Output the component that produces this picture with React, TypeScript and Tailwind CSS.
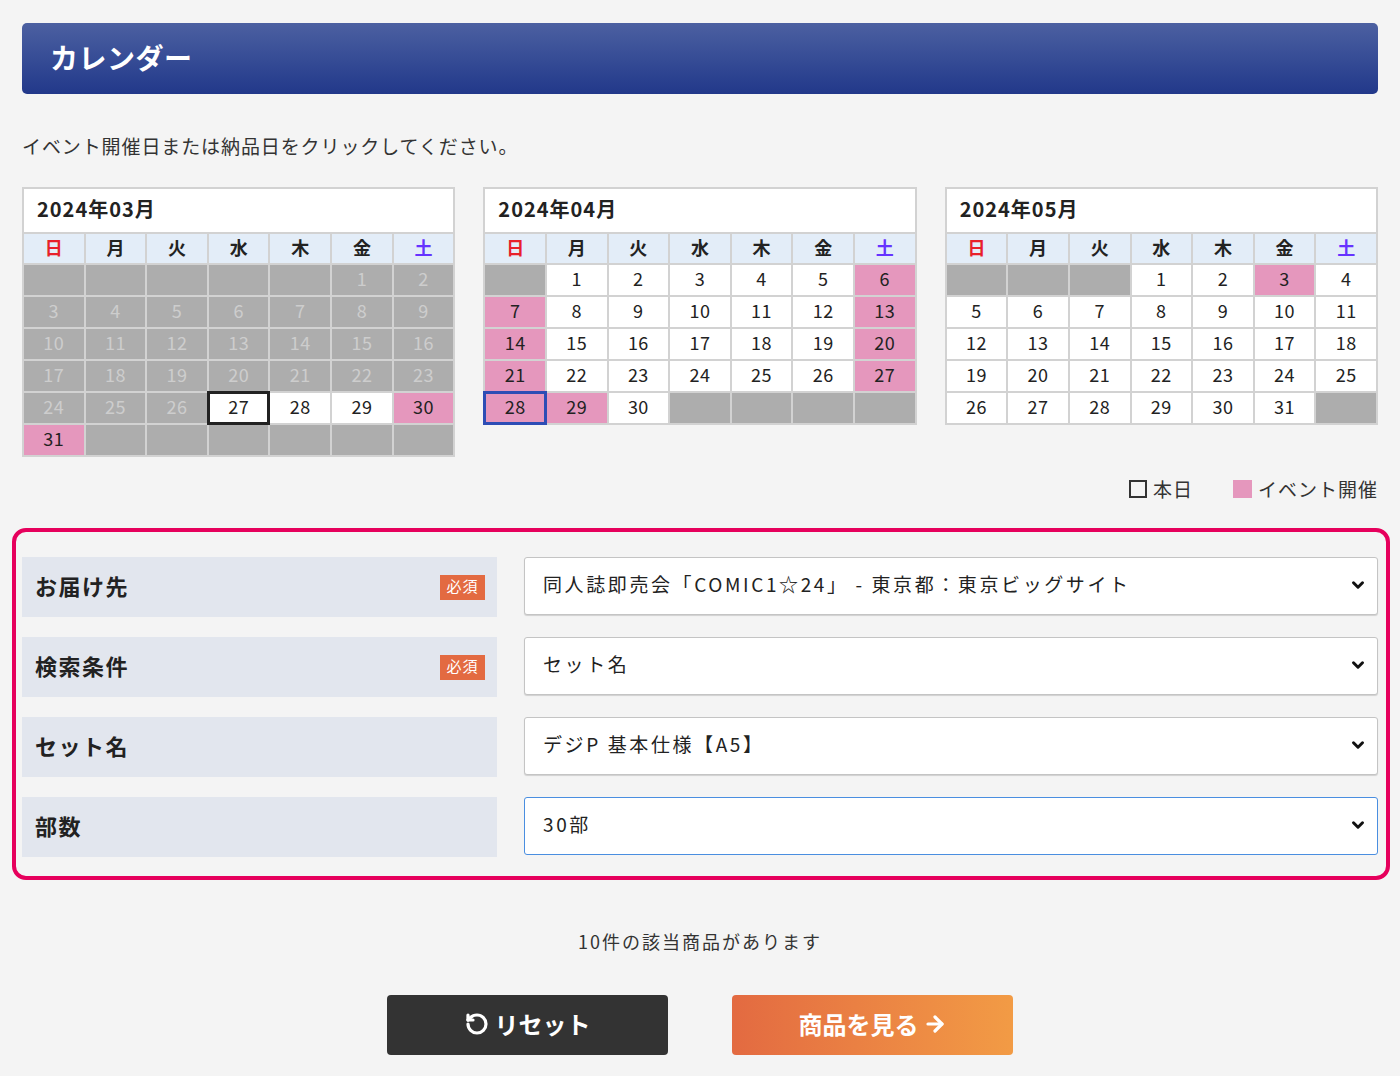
import { ChevronDown, RotateCcw, ArrowRight } from "lucide-react";

type Cell = { d?: number; kind: "gray" | "white" | "pink"; today?: boolean; selected?: boolean };

const weekdays = ["日", "月", "火", "水", "木", "金", "土"];

function buildMonth(startDow: number, days: number, kindOf: (d: number) => Cell["kind"], extra: (d: number) => Partial<Cell> = () => ({})) {
  const cells: Cell[] = [];
  for (let i = 0; i < startDow; i++) cells.push({ kind: "gray" });
  for (let d = 1; d <= days; d++) cells.push({ d, kind: kindOf(d), ...extra(d) });
  while (cells.length % 7 !== 0) cells.push({ kind: "gray" });
  return cells;
}

const months = [
  {
    title: "2024年03月",
    cells: buildMonth(
      5,
      31,
      (d) => (d < 27 ? "gray" : d >= 30 ? "pink" : "white"),
      (d) => (d === 27 ? { today: true } : {})
    ),
  },
  {
    title: "2024年04月",
    cells: buildMonth(
      1,
      30,
      (d) => ([6, 7, 13, 14, 20, 21, 27, 28, 29].includes(d) ? "pink" : "white"),
      (d) => (d === 28 ? { selected: true } : {})
    ),
  },
  {
    title: "2024年05月",
    cells: buildMonth(3, 31, (d) => (d === 3 ? "pink" : "white")),
  },
];

const cellBg = {
  gray: "bg-[#adadad] text-[#cdcdcd]",
  white: "bg-white text-[#222]",
  pink: "bg-[#e597bd] text-[#222]",
};

function Calendar({ title, cells }: { title: string; cells: Cell[] }) {
  return (
    <div className="bg-[#d2d2d2] p-[2px]">
      <div className="h-[43px] bg-white flex items-center pl-[13px] pb-[3px] text-[20px] tracking-[1px] font-bold text-[#222]">{title}</div>
      <div className="grid grid-cols-7 gap-[2px] mt-[2px]">
        {weekdays.map((w, i) => (
          <div
            key={w}
            className={`h-[29px] bg-[#e3edf8] flex items-center justify-center pb-[2px] text-[18px] font-bold ${
              i === 0 ? "text-[#e8202a]" : i === 6 ? "text-[#6633ff]" : "text-[#222]"
            }`}
          >
            {w}
          </div>
        ))}
        {cells.map((c, i) => (
          <div
            key={i}
            className={`h-[30px] flex items-center justify-center pb-[3px] text-[18px] tracking-[0.5px] ${cellBg[c.kind]} ${
              c.today ? "shadow-[0_0_0_2px_#222,inset_0_0_0_1px_#222] relative z-10" : ""
            } ${c.selected ? "shadow-[0_0_0_2px_#2d4db5,inset_0_0_0_1px_#2d4db5] relative z-10" : ""}`}
          >
            {c.d ?? ""}
          </div>
        ))}
      </div>
    </div>
  );
}

function Required() {
  return (
    <span className="w-[45px] h-[25px] bg-[#e36a41] text-white text-[15px] tracking-[1px] flex items-center justify-center pb-[2px]">必須</span>
  );
}

function FakeSelect({ value, focused }: { value: string; focused?: boolean }) {
  return (
    <div
      className={`h-[58px] bg-white rounded-[3px] flex items-center justify-between pl-[18px] pr-[10px] pb-[3px] text-[19px] text-[#222] tracking-[2.6px] ${
        focused ? "border border-[#4a8ee0]" : "border border-[#c4c4c4] shadow-[0_1px_1px_rgba(0,0,0,0.15)]"
      }`}
    >
      <span>{value}</span>
      <ChevronDown size={18} strokeWidth={4} className="text-[#111]" />
    </div>
  );
}

const rows = [
  { label: "お届け先", req: true, value: "同人誌即売会「COMIC1☆24」 - 東京都：東京ビッグサイト" },
  { label: "検索条件", req: true, value: "セット名" },
  { label: "セット名", req: false, value: "デジP 基本仕様【A5】" },
  { label: "部数", req: false, value: "30部", focused: true },
];

export default function App() {
  return (
    <div
      className="min-h-screen bg-[#f4f4f4] px-[22px] pt-[23px] pb-[20px] text-[#222]"
      style={{ fontFamily: '"Noto Sans CJK JP", "Noto Sans", sans-serif' }}
    >
      <div className="h-[71px] rounded-[5px] bg-gradient-to-b from-[#4c60a1] to-[#22388a] flex items-center pl-[28px] pb-[3px]">
        <h1 className="text-white text-[28px] font-bold tracking-[0.5px]">カレンダー</h1>
      </div>

      <p className="mt-[38px] text-[19px] tracking-[0.9px] text-[#333] leading-[27px]">イベント開催日または納品日をクリックしてください。</p>

      <div className="mt-[28px] grid grid-cols-3 gap-[28px] items-start">
        {months.map((m) => (
          <Calendar key={m.title} title={m.title} cells={m.cells} />
        ))}
      </div>

      <div className="mt-[20px] flex justify-end items-center gap-[40px] text-[19px] tracking-[1px] text-[#333] leading-[24px]">
        <div className="flex items-center gap-[6px]">
          <span className="w-[18px] h-[18px] border-2 border-[#333]" />
          <span>本日</span>
        </div>
        <div className="flex items-center gap-[6px]">
          <span className="w-[19px] h-[18px] bg-[#e597bd]" />
          <span>イベント開催</span>
        </div>
      </div>

      <div className="mt-[27px] ml-[-10px] mr-[-12px] border-4 border-[#e6005c] rounded-[14px] pl-[6px] pr-[8px] pt-[25px] pb-[19px] flex flex-col gap-[20px]">
        {rows.map((r) => (
          <div key={r.label} className="grid grid-cols-[475px_1fr] gap-x-[27px] items-start">
            <div className="h-[60px] bg-[#e2e6ee] flex items-center justify-between pl-[13px] pr-[12px]">
              <span className="text-[22px] tracking-[1.5px] font-bold pb-[4px]">{r.label}</span>
              {r.req && <Required />}
            </div>
            <FakeSelect value={r.value} focused={r.focused} />
          </div>
        ))}
      </div>

      <p className="mt-[48px] text-center text-[18px] tracking-[2px] text-[#333]">10件の該当商品があります</p>

      <div className="mt-[40px] flex justify-center gap-[64px]">
        <button className="w-[281px] h-[60px] rounded-[4px] bg-[#333] text-white text-[24px] font-bold flex items-center justify-center gap-[6px] pb-[2px]">
          <RotateCcw size={24} strokeWidth={3.2} />
          リセット
        </button>
        <button className="w-[281px] h-[60px] rounded-[4px] bg-gradient-to-r from-[#e36a41] to-[#f29b45] text-white text-[24px] font-bold flex items-center justify-center gap-[4px] pb-[2px]">
          商品を見る
          <ArrowRight size={24} strokeWidth={3.2} />
        </button>
      </div>
    </div>
  );
}
